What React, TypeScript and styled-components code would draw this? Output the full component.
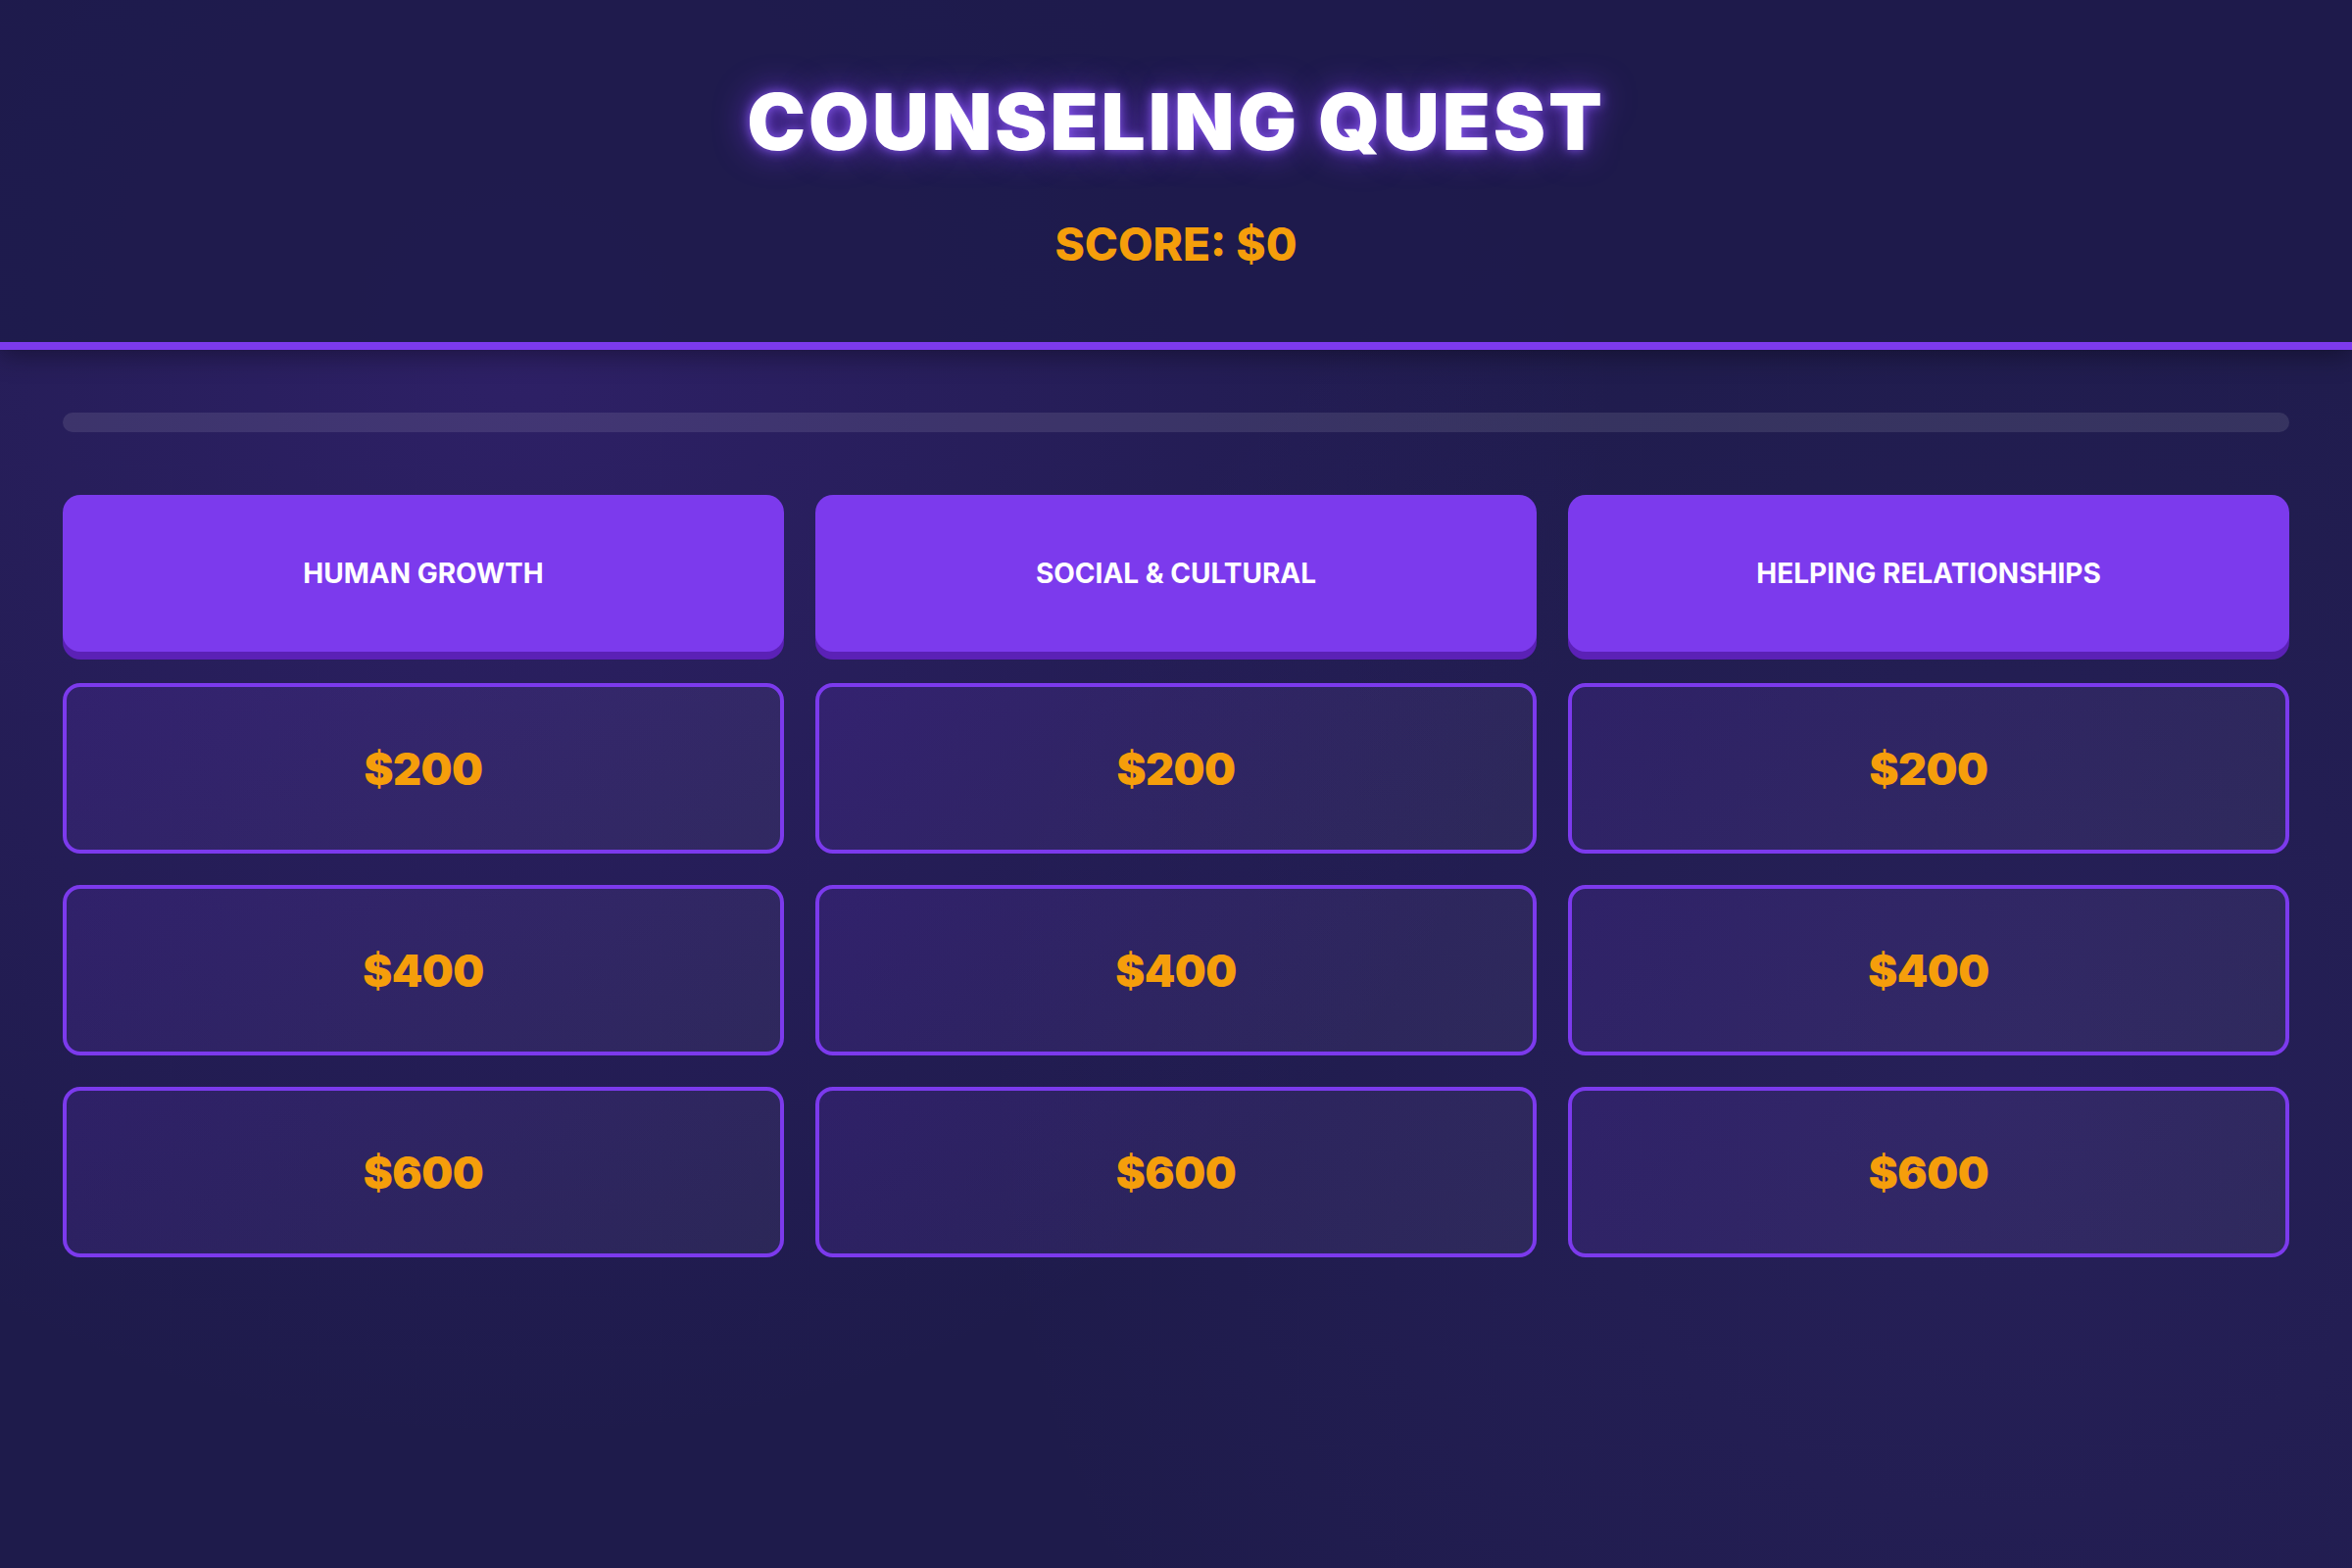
import React from 'react'
import styled, { createGlobalStyle } from 'styled-components'

const GlobalStyle = createGlobalStyle`
  * { box-sizing: border-box; }
  html, body {
    margin: 0;
    padding: 0;
    min-height: 100%;
  }
  body {
    min-height: 1600px;
    font-family: Inter, "Noto Sans", "Liberation Sans", sans-serif;
    color: #ffffff;
    background-color: #1e1b4b;
    background-image:
      radial-gradient(circle at 22% 22%, rgba(124, 58, 237, 0.17), transparent 50%),
      radial-gradient(circle at 85% 70%, rgba(139, 92, 246, 0.08), transparent 45%);
  }
`

const categories = ['Human Growth', 'Social & Cultural', 'Helping Relationships']
const values = [200, 400, 600]

const Page = styled.div`
  min-height: 1600px;
  display: flex;
  flex-direction: column;
`

const Header = styled.header`
  display: flex;
  flex-direction: column;
  align-items: center;
  padding: 76px 0 72px;
  background: rgba(30, 27, 75, 0.9);
  border-bottom: 8px solid #7c3aed;
  box-shadow: 0 6px 24px rgba(0, 0, 0, 0.35);
`

const Title = styled.h1`
  margin: 0;
  font-size: 80px;
  line-height: 1.2;
  font-weight: 900;
  letter-spacing: 3px;
  text-transform: uppercase;
  color: #ffffff;
  text-shadow: 0 0 12px rgba(139, 92, 246, 0.95), 0 0 34px rgba(124, 58, 237, 0.8);
`

const Score = styled.div`
  margin-top: 50px;
  font-size: 46px;
  line-height: 1.2;
  font-weight: 800;
  text-transform: uppercase;
  color: #f59e0b;
`

const Main = styled.main`
  padding: 64px;
`

const Progress = styled.div`
  height: 20px;
  border-radius: 10px;
  background: rgba(255, 255, 255, 0.1);
  overflow: hidden;
  margin-bottom: 64px;
`

const ProgressFill = styled.div`
  height: 100%;
  background: linear-gradient(90deg, #7c3aed, #f59e0b);
`

const Board = styled.div`
  display: grid;
  grid-template-columns: repeat(3, 1fr);
  gap: 32px;
`

const Column = styled.div`
  display: flex;
  flex-direction: column;
  gap: 32px;
`

const Category = styled.div`
  height: 160px;
  display: flex;
  align-items: center;
  justify-content: center;
  border-radius: 18px;
  background: #7c3aed;
  box-shadow: 0 8px 0 #5b21b6;
  font-size: 28px;
  font-weight: 700;
  text-transform: uppercase;
  color: #ffffff;
`

const Cell = styled.button<{ $used?: boolean }>`
  height: 174px;
  display: flex;
  align-items: center;
  justify-content: center;
  border: 4px solid #7c3aed;
  border-radius: 18px;
  background: linear-gradient(135deg, rgba(124, 58, 237, 0.14), rgba(255, 255, 255, 0.05));
  font-family: inherit;
  font-size: 45px;
  font-weight: 900;
  letter-spacing: -0.5px;
  color: #f59e0b;
  cursor: pointer;
  opacity: ${p => (p.$used ? 0.3 : 1)};
`

export default function App() {
  const score = 0
  const answered = 0
  const total = categories.length * values.length

  return (
    <Page>
      <GlobalStyle />
      <Header>
        <Title>Counseling Quest</Title>
        <Score>Score: ${score}</Score>
      </Header>
      <Main>
        <Progress>
          <ProgressFill style={{ width: `${(answered / total) * 100}%` }} />
        </Progress>
        <Board>
          {categories.map(cat => (
            <Column key={cat}>
              <Category>{cat}</Category>
              {values.map(v => (
                <Cell key={v}>${v}</Cell>
              ))}
            </Column>
          ))}
        </Board>
      </Main>
    </Page>
  )
}
